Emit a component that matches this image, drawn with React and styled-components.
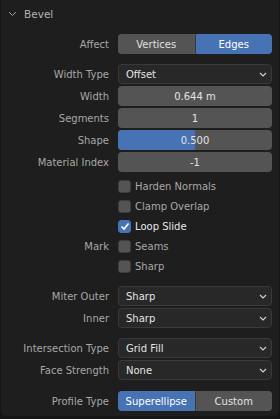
import React from 'react';
import styled, { createGlobalStyle } from 'styled-components';

const GlobalStyle = createGlobalStyle`
  html, body {
    margin: 0;
    padding: 0;
    background: #161616;
  }
  body {
    font-family: 'DejaVu Sans', 'Liberation Sans', sans-serif;
    font-size: 10px;
  }
`;

const Panel = styled.div`
  width: 278px;
  margin: 0 1px;
  height: 416px;
  background: #1e1e1e;
  border-radius: 0 0 5px 5px;
  box-sizing: border-box;
`;

const Header = styled.div`
  height: 28px;
  display: flex;
  align-items: center;
  padding-left: 7px;
  gap: 7px;
  color: #b4b4b4;
  font-size: 10.5px;
`;

const Body = styled.div`
  display: flex;
  flex-direction: column;
  padding-top: 6px;
`;

const Group = styled.div`
  display: flex;
  flex-direction: column;
  gap: ${(p) => (p.$tight ? '0' : '2px')};
  margin-top: ${(p) => p.$top || 0}px;
`;

const Row = styled.div`
  display: grid;
  grid-template-columns: 108px 154px;
  column-gap: 9px;
  align-items: center;
  height: 20px;
`;

const Label = styled.div`
  text-align: right;
  color: #a8a8a8;
  white-space: nowrap;
`;

const Segmented = styled.div`
  display: flex;
  height: 20px;
  border-radius: 4px;
  overflow: hidden;
  gap: 1px;
  background: #3a3a3a;
`;

const Segment = styled.div`
  flex: 1;
  display: flex;
  align-items: center;
  justify-content: center;
  background: ${(p) => (p.$active ? '#4772b3' : '#545454')};
  color: ${(p) => (p.$active ? '#ffffff' : '#e0e0e0')};
`;

const Dropdown = styled.div`
  height: 20px;
  box-sizing: border-box;
  border: 1px solid #3a3a3a;
  background: #282828;
  border-radius: 4px;
  display: flex;
  align-items: center;
  justify-content: space-between;
  padding: 0 4px 0 7px;
  color: #e4e4e4;
`;

const Field = styled.div`
  position: relative;
  height: 20px;
  border-radius: 4px;
  background: #545454;
  overflow: hidden;
  display: flex;
  align-items: center;
  justify-content: center;
  color: #e4e4e4;
`;

const Fill = styled.div`
  position: absolute;
  left: 0;
  top: 0;
  bottom: 0;
  background: #4772b3;
`;

const FieldText = styled.span`
  position: relative;
`;

const Check = styled.div`
  display: flex;
  align-items: center;
  gap: 4px;
  color: ${(p) => (p.$on ? '#e8e8e8' : '#a8a8a8')};
`;

const Box = styled.div`
  width: 13px;
  height: 13px;
  box-sizing: border-box;
  border-radius: 3px;
  border: 1px solid ${(p) => (p.$on ? '#4772b3' : '#3d3d3d')};
  background: ${(p) => (p.$on ? '#4772b3' : '#545454')};
  display: flex;
  align-items: center;
  justify-content: center;
`;

const Chevron = () => (
  <svg width="8" height="5" viewBox="0 0 8 5">
    <path d="M1 1 L4 4 L7 1" fill="none" stroke="#d0d0d0" strokeWidth="1.2" />
  </svg>
);

const Select = ({ value }) => (
  <Dropdown>
    <span>{value}</span>
    <Chevron />
  </Dropdown>
);

const CheckItem = ({ label, on }) => (
  <Check $on={on}>
    <Box $on={on}>
      {on && (
        <svg width="10" height="9" viewBox="0 0 10 9">
          <path d="M1.5 4.5 L4 7 L8.5 1.5" fill="none" stroke="#fff" strokeWidth="1.6" />
        </svg>
      )}
    </Box>
    <span>{label}</span>
  </Check>
);

export default function App() {
  return (
    <>
      <GlobalStyle />
      <Panel>
        <Header>
          <svg width="9" height="6" viewBox="0 0 9 6">
            <path d="M1 1 L4.5 4.5 L8 1" fill="none" stroke="#a0a0a0" strokeWidth="1" />
          </svg>
          <span>Bevel</span>
        </Header>
        <Body>
          <Group>
            <Row>
              <Label>Affect</Label>
              <Segmented>
                <Segment>Vertices</Segment>
                <Segment $active>Edges</Segment>
              </Segmented>
            </Row>
          </Group>
          <Group $top={10}>
            <Row>
              <Label>Width Type</Label>
              <Select value="Offset" />
            </Row>
            <Row>
              <Label>Width</Label>
              <Field><FieldText>0.644 m</FieldText></Field>
            </Row>
            <Row>
              <Label>Segments</Label>
              <Field><FieldText>1</FieldText></Field>
            </Row>
            <Row>
              <Label>Shape</Label>
              <Field>
                <Fill style={{ width: `${0.5 * 100}%` }} />
                <FieldText>0.500</FieldText>
              </Field>
            </Row>
            <Row>
              <Label>Material Index</Label>
              <Field><FieldText>-1</FieldText></Field>
            </Row>
          </Group>
          <Group $tight $top={4}>
            <Row>
              <Label />
              <CheckItem label="Harden Normals" />
            </Row>
            <Row>
              <Label />
              <CheckItem label="Clamp Overlap" />
            </Row>
            <Row>
              <Label />
              <CheckItem label="Loop Slide" on />
            </Row>
            <Row>
              <Label>Mark</Label>
              <CheckItem label="Seams" />
            </Row>
            <Row>
              <Label />
              <CheckItem label="Sharp" />
            </Row>
          </Group>
          <Group $top={10}>
            <Row>
              <Label>Miter Outer</Label>
              <Select value="Sharp" />
            </Row>
            <Row>
              <Label>Inner</Label>
              <Select value="Sharp" />
            </Row>
          </Group>
          <Group $top={10}>
            <Row>
              <Label>Intersection Type</Label>
              <Select value="Grid Fill" />
            </Row>
            <Row>
              <Label>Face Strength</Label>
              <Select value="None" />
            </Row>
          </Group>
          <Group $top={11}>
            <Row>
              <Label>Profile Type</Label>
              <Segmented>
                <Segment $active>Superellipse</Segment>
                <Segment>Custom</Segment>
              </Segmented>
            </Row>
          </Group>
        </Body>
      </Panel>
    </>
  );
}
